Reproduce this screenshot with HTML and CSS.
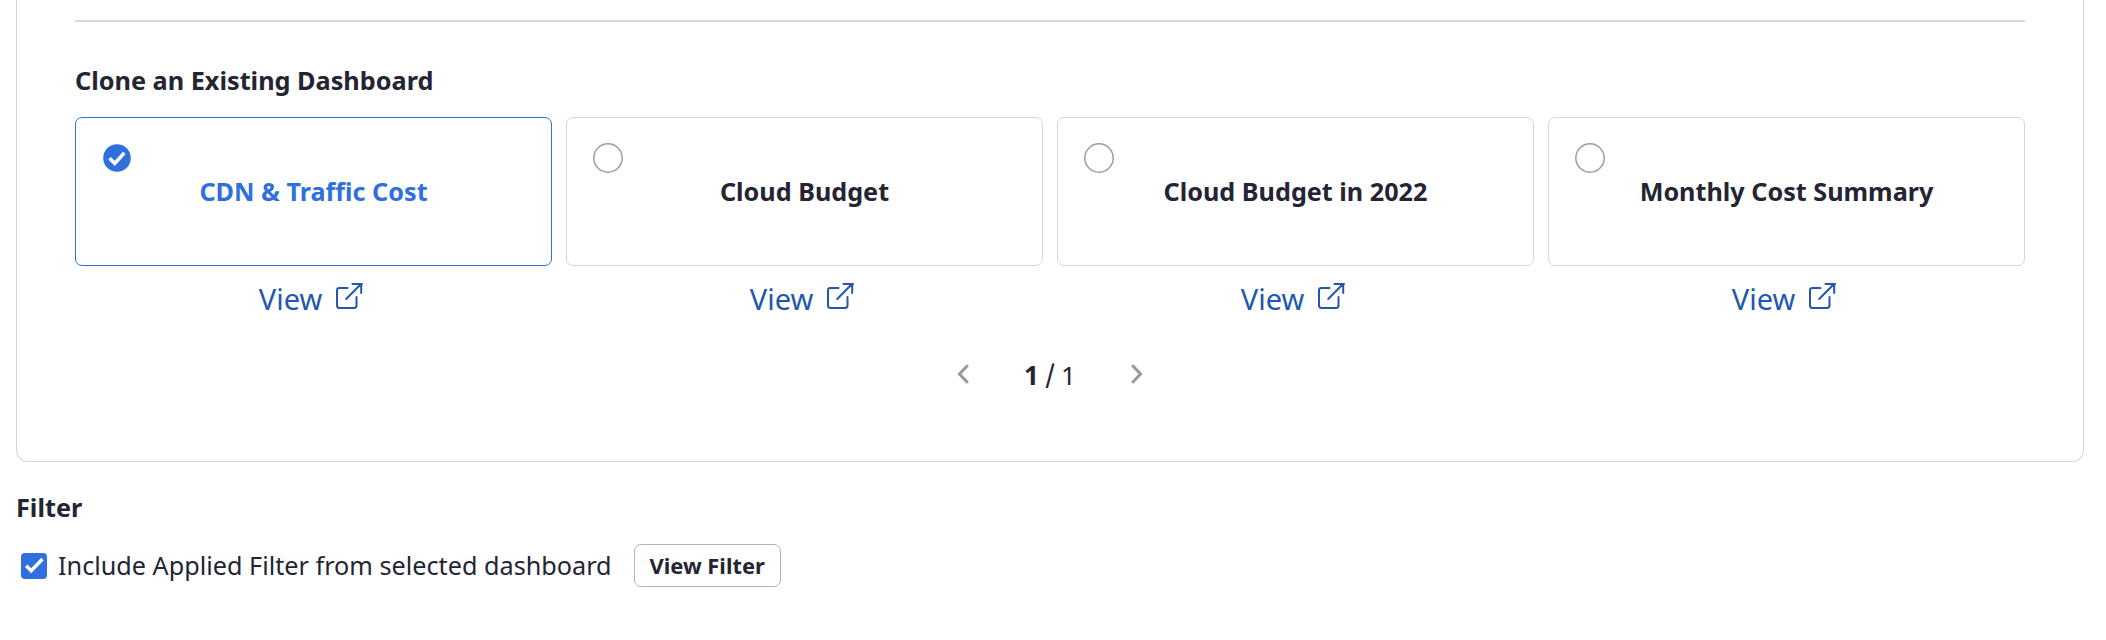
FILE: index.html
```
<!DOCTYPE html>
<html lang="en">
<head>
<meta charset="utf-8">
<title>Create Dashboard</title>
<link rel="stylesheet" href="styles.css">
</head>
<body>
<svg class="sprite" width="0" height="0">
  <symbol id="external" viewBox="0 0 28 28"><path d="M12.500 6H4.400Q2 6 2 8.400v15.200Q2 26 4.400 26H19.100Q21.500 26 21.500 23.600V15M17.500 1.900H27M26.200 1.900V11M26 2 11.200 17" fill="none" stroke="currentColor" stroke-width="2" stroke-linecap="round"/></symbol>
</svg>
<main class="page">
  <section class="panel">
    <hr class="divider">
    <h2 class="heading">Clone an Existing Dashboard</h2>
    <div class="boards">
      <div class="board">
        <div class="card card-selected">
          <svg class="radio" viewBox="0 0 30 30"><circle cx="15" cy="15" r="13.800" fill="#2f70de"/><path d="M7.600 15.200l5.200 5.200L22.300 9.900" fill="none" stroke="#fff" stroke-width="3.600"/></svg>
          <span>CDN &amp; Traffic Cost</span>
        </div>
        <a class="view"><span>View</span><svg class="view-icon"><use href="#external"/></svg></a>
      </div>
      <div class="board">
        <div class="card">
          <svg class="radio" viewBox="0 0 30 30"><circle class="ring" cx="15" cy="15" r="14.200"/></svg>
          <span>Cloud Budget</span>
        </div>
        <a class="view"><span>View</span><svg class="view-icon"><use href="#external"/></svg></a>
      </div>
      <div class="board">
        <div class="card">
          <svg class="radio" viewBox="0 0 30 30"><circle class="ring" cx="15" cy="15" r="14.200"/></svg>
          <span>Cloud Budget in 2022</span>
        </div>
        <a class="view"><span>View</span><svg class="view-icon"><use href="#external"/></svg></a>
      </div>
      <div class="board">
        <div class="card">
          <svg class="radio" viewBox="0 0 30 30"><circle class="ring" cx="15" cy="15" r="14.200"/></svg>
          <span>Monthly Cost Summary</span>
        </div>
        <a class="view"><span>View</span><svg class="view-icon"><use href="#external"/></svg></a>
      </div>
    </div>
    <nav class="pager">
      <svg class="chevron" viewBox="0 0 12 20"><path d="M10 2 2.500 10 10 18"/></svg>
      <span class="pages"><b>1</b><span class="slash">/</span><span>1</span></span>
      <svg class="chevron" viewBox="0 0 12 20"><path d="M2 2 9.500 10 2 18"/></svg>
    </nav>
  </section>
  <h2 class="heading filter-heading">Filter</h2>
  <div class="filter-row">
    <svg class="checkbox" viewBox="0 0 26 26"><rect width="26" height="26" rx="4" fill="#2f70de"/><path d="M5.200 12.800l5 5L21.500 6" fill="none" stroke="#fff" stroke-width="3.400"/></svg>
    <span class="filter-label">Include Applied Filter from selected dashboard</span>
    <button class="button">View Filter</button>
  </div>
</main>
</body>
</html>
```
FILE: styles.css
```
* { box-sizing: border-box; }
body {
  margin: 0;
  background: #fff;
  color: #232533;
  font-family: "Noto Sans", sans-serif;
  font-size: 25.200px;
  line-height: 36px;
}
.sprite { display: block; height: 0; }
.page { padding: 0 22px 0 16px; }
.panel {
  height: 462px;
  padding: 20px 58px 0;
  border: 1px solid #d5d5d7;
  border-top: 0;
  border-radius: 0 0 12px 12px;
}
.divider { height: 2px; margin: 0 0 40px; border: 0; background: #d7d9d9; }
.heading { margin: 0; font-size: 25.250px; font-weight: 700; line-height: 36px; }
.boards { display: grid; grid-template-columns: repeat(4, 1fr); gap: 14px; margin-top: 19px; }
.card {
  position: relative;
  display: flex;
  align-items: center;
  justify-content: center;
  height: 149px;
  padding-bottom: 1px;
  border: 1px solid #d7d7d9;
  border-radius: 7px;
  font-weight: 700;
}
.card-selected { border-color: #2f70de; color: #2f70de; }
.radio { position: absolute; top: 25px; left: 26px; width: 30px; height: 30px; }
.ring { fill: none; stroke: #9c9ca8; stroke-width: 1.500; }
.view {
  display: flex;
  align-items: center;
  justify-content: center;
  gap: 13px;
  margin-top: 13px;
  padding-right: 5px;
  color: #2357ae;
  font-size: 29px;
  line-height: 40px;
}
.view-icon { width: 28px; height: 28px; margin-top: -6px; }
.pager { display: flex; align-items: center; justify-content: center; gap: 54px; margin-top: 37px; }
.chevron { width: 12px; height: 20px; margin-top: -1px; fill: none; stroke: #98989f; stroke-width: 3; stroke-linecap: round; }
.pages { display: flex; align-items: baseline; justify-content: center; width: 54px; padding-top: 1px; font-size: 26px; }
.slash { margin: 0 6px; font-family: Inter, sans-serif; font-size: 28px; }
.filter-heading { margin-top: 27px; }
.filter-row { display: flex; align-items: center; margin-top: 19px; padding-left: 5px; }
.checkbox { width: 26px; height: 26px; }
.filter-label { margin-left: 11px; padding-bottom: 2px; font-size: 25.230px; }
.button {
  width: 147px;
  height: 43px;
  margin-left: 22px;
  padding: 0;
  border: 1px solid #b4b4b8;
  border-radius: 7px;
  background: #fff;
  color: inherit;
  font: 700 21.900px/30px "Noto Sans", sans-serif;
}
```
